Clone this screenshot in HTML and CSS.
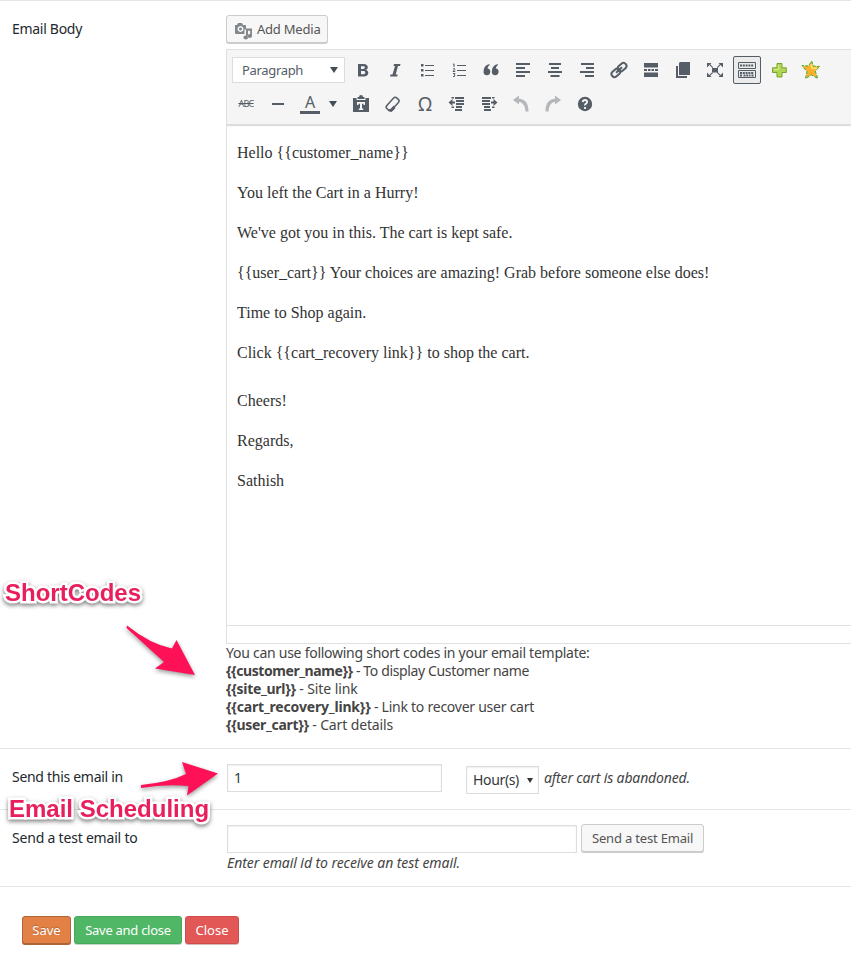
FILE: index.html
```html
<!DOCTYPE html>
<html lang="en">
<head>
<meta charset="utf-8">
<title>Email template</title>
<link rel="stylesheet" href="styles.css">
</head>
<body>
<main class="form">
  <section class="row row-body">
    <div class="label"><span class="t-emailbody">Email Body</span></div>
    <div class="field">
      <button class="btn media">
        <svg width="18" height="18" viewBox="0 0 18 18"><path fill="#82878c" fill-rule="evenodd" d="M0 3h2l1-2h4l1 2h2q1 0 1 1v3.500H9.500V12H1q-1 0-1-1zM5.500 4a3 3 0 1 0 .01 0zM5.500 5.500a1.500 1.500 0 1 1-.01 0zM11 6.500h6v7.500a2.200 2 0 1 1-1.800-2V8.800H13V15.500a2.300 2 0 1 1-2-2z"/></svg>
        <span class="t-media">Add Media</span>
      </button>
      <div class="editor">
        <div class="toolbar">
          <div class="tools">
            <div class="listbox"><span class="t-para">Paragraph</span><i class="caret"></i></div>
            <span class="tool"><svg viewBox="0 0 20 20"><path fill-rule="evenodd" d="M5 4h5.500c3 0 4.300 1.300 4.300 3.200 0 1.400-.8 2.300-2 2.700 1.500.3 2.500 1.300 2.500 2.900 0 2.300-1.700 3.700-4.700 3.700H5zM8 6.200v2.700h2c1.300 0 1.900-.5 1.900-1.400S11.300 6.200 10 6.200zM8 11v3.200h2.300c1.400 0 2-.6 2-1.600s-.7-1.600-2-1.600z"/></svg></span>
            <span class="tool"><svg viewBox="0 0 20 20"><path d="M9 4h6.500l-.5 2h-2l-2.300 8.500h2l-.5 2H5l.5-2h2L10 6H8.500z"/></svg></span>
            <span class="tool"><svg viewBox="0 0 20 20"><path d="M4 4h2.500v2.500H4zM4 9h2.500v2.500H4zM4 14h2.500v2.500H4zM8 5h9v1H8zM8 10h9v1H8zM8 15h9v1H8z"/></svg></span>
            <span class="tool"><svg viewBox="0 0 20 20"><path d="M8 5h9v1H8zM8 10h9v1H8zM8 15h9v1H8z"/><path class="line" d="M4 4.500l1-.7V7M4 9q2-1 2 .2L4 11.500h2.300M4 13.500h2L5 15q1.300 0 1 1-.5 1-2 .5"/></svg></span>
            <span class="tool"><svg viewBox="0 0 20 20"><path d="M8.500 4v1.200Q6.800 6 6.500 8.500h.4a3.400 3.400 0 1 1-4.400 3.700Q2.300 5.500 8.500 4zM16.800 4v1.200Q15.100 6 14.800 8.500h.4a3.400 3.400 0 1 1-4.400 3.700Q10.600 5.500 16.800 4z"/></svg></span>
            <span class="tool"><svg viewBox="0 0 20 20"><path d="M3 3h14v2H3zM3 7h9v2H3zM3 11h14v2H3zM3 15h9v2H3z"/></svg></span>
            <span class="tool"><svg viewBox="0 0 20 20"><path d="M4 3h12v2H4zM6 7h8v2H6zM3 11h14v2H3zM5.500 15h9v2h-9z"/></svg></span>
            <span class="tool"><svg viewBox="0 0 20 20"><path d="M4 3h13v2H4zM9 7h8v2H9zM3 11h14v2H3zM8 15h9v2H8z"/></svg></span>
            <span class="tool"><svg viewBox="0 0 20 20"><g transform="rotate(-42 10 10)" fill="none" stroke="#555d66" stroke-width="2"><rect x="1" y="7" width="9.500" height="6" rx="3"/><rect x="9.500" y="7" width="9.500" height="6" rx="3"/><path d="M6 10h8"/></g></svg></span>
            <span class="tool"><svg viewBox="0 0 20 20"><path d="M3 3h14v4.500H3zM3 9h3v2H3zM7 9h2.500v2H7zM10.500 9H13v2h-2.500zM14 9h3v2h-3zM3 12.500h14V17H3z"/></svg></span>
            <span class="tool"><svg viewBox="0 0 20 20"><path d="M7 2h10v13H6V3zM3 6h2v10h9v2H3z"/></svg></span>
            <span class="tool"><svg viewBox="0 0 20 20"><path d="M7 8h6v4.500H7zM2 3h4.500L5.200 4.300l3 2.900-.8.800-3-2.900L2 7.500zM18 3h-4.500l1.300 1.300-3 2.900.8.800 3-2.900L18 7.500zM2 17h4.500l-1.300-1.300 3-2.900-.8-.8-3 2.900L2 12.500zM18 17h-4.500l1.300-1.300-3-2.900.8-.8 3 2.900 2.400-2.400z"/></svg></span>
            <span class="tool active"><svg viewBox="0 0 20 20"><path class="line" d="M1.500 2.500h17v6h-17zM1.500 10.500h17v7h-17z"/><path class="keys" d="M3 5.500h14M3 13h14M3 15.500h2.500M6.500 15.500h7M14.500 15.500H17"/></svg></span>
            <span class="tool"><svg viewBox="0 0 20 20"><path d="M8 3.500h5v4.300h4.300v4.700H13V17H8v-4.500H3.500V7.800H8z" fill="#b2d554" stroke="#76a52f" stroke-linejoin="round"/><path d="M9.500 5v4.500H5" fill="none" stroke="#d3e993"/></svg></span>
            <span class="tool"><svg viewBox="0 0 20 20"><path d="M10.700 1l1.600 5 6.500.5-4.600 4.500 2.600 7.500-6.300-3.500-6 3.500 1.500-6.800L1 5.500l6.500.5z" fill="#fbb02d" stroke="#36af35" stroke-dasharray="3 1.500"/><path d="M10 4l1 4 5 .5" fill="none" stroke="#ffe36a" stroke-width="1.500"/></svg></span>
          </div>
          <div class="tools">
            <span class="tool abc">ABC</span>
            <span class="tool"><svg viewBox="0 0 20 20"><path d="M4 9h12v2H4z"/></svg></span>
            <span class="tool split"><span class="fore">A</span><i class="caret"></i></span>
            <span class="tool"><svg viewBox="0 0 20 20"><path fill-rule="evenodd" d="M2 4h3.500v2h9V4H18v14H2zM6.500 3H8a2 2 0 0 1 4 0h1.500v2h-7zM6 8v3h1.500V9.700H9v4.800H7.800V16h4.400v-1.500H11V9.700h1.500V11H14V8z"/></svg></span>
            <span class="tool"><svg viewBox="0 0 20 20"><g transform="rotate(-48 10 10)"><rect class="thick" x="2.500" y="6.500" width="14.500" height="6.500" rx="2.200"/><path d="M2.500 10v2.500q0 2 2 2h4l1-3H4.500z"/></g></svg></span>
            <span class="tool omega">Ω</span>
            <span class="tool"><svg viewBox="0 0 20 20"><path d="M8 3h9v2H8zM9 6h8v2H9zM9 9h8v2H9zM9 12h6v2H9zM8 15h7v2H8zM1.500 8.500L5.500 5v2.500H8v2H5.500V12zM4.500 3h2.500v1.500H4.500zM4.500 12.500H7V14H4.500z"/></svg></span>
            <span class="tool"><svg viewBox="0 0 20 20"><path d="M3 3h9v2H3zM3 6h8v2H3zM3 9h8v2H3zM5 12h6v2H5zM5 15h7v2H5zM18.500 8.500L14.500 5v2.500H12v2h2.500V12zM13 3h2.500v1.500H13zM13 12.500h2.500V14H13z"/></svg></span>
            <span class="tool off"><svg viewBox="0 0 20 20"><path d="M8 1.500v3.200c6 .5 9.500 4 9.500 12.800h-3C14 11.500 12 8.500 8 8v2.500L2 6z"/></svg></span>
            <span class="tool off"><svg viewBox="0 0 20 20"><path d="M12 1.500v3.200c-6 .5-9.500 4-9.500 12.800h3C6 11.500 8 8.500 12 8v2.500L18 6z"/></svg></span>
            <span class="tool"><svg viewBox="0 0 20 20"><circle cx="10" cy="10" r="7.200"/><path d="M7.700 8Q8 6 10 6t2.200 1.800Q12.200 9 11 9.600t-1 1.900M10 13v2" fill="none" stroke="#f5f5f5" stroke-width="1.800"/></svg></span>
          </div>
        </div>
        <div class="content">
          <p>Hello {{customer_name}}</p>
          <p>You left the Cart in a Hurry!</p>
          <p>We've got you in this. The cart is kept safe.</p>
          <p>{{user_cart}} Your choices are amazing! Grab before someone else does!</p>
          <p>Time to Shop again.</p>
          <p class="last">Click {{cart_recovery link}} to shop the cart.</p>
          <p>Cheers!</p>
          <p>Regards,</p>
          <p>Sathish</p>
        </div>
        <div class="status"></div>
      </div>
      <div class="codes">
        <div><span class="c0">You can use following short codes in your email template:</span></div>
        <div><b class="c1">{{customer_name}}</b><span class="c1s"> - To display Customer name</span></div>
        <div><b class="c2">{{site_url}}</b><span class="c2s"> - Site link</span></div>
        <div><b class="c3">{{cart_recovery_link}}</b><span class="c3s"> - Link to recover user cart</span></div>
        <div><b class="c4">{{user_cart}}</b><span class="c4s"> - Cart details</span></div>
      </div>
    </div>
  </section>
  <section class="row row-send">
    <div class="label"><span class="t-sendin">Send this email in</span></div>
    <div class="field inline">
      <div class="input delay">1</div>
      <div class="input unit"><span class="t-hour">Hour(s)</span><i class="caret small"></i></div>
      <em class="t-after">after cart is abandoned.</em>
    </div>
  </section>
  <section class="row row-test">
    <div class="label"><span class="t-test">Send a test email to</span></div>
    <div class="field">
      <div class="inline">
        <div class="input address"></div>
        <button class="btn send"><span class="t-btn">Send a test Email</span></button>
      </div>
      <div class="hint"><em class="t-hint">Enter email id to receive an test email.</em></div>
    </div>
  </section>
  <section class="actions">
    <button class="act save">Save</button>
    <button class="act saveclose"><span class="t-sc">Save and close</span></button>
    <button class="act close">Close</button>
  </section>
</main>
<svg class="arrows" width="240" height="200" viewBox="0 610 240 200">
  <path d="M127 625.500Q150 644 172 648.500L176.500 640 195 675 155 668.500 164 662Q143 643 126.500 628z"/>
  <path d="M141 785Q170 782 186 774L182 762 218 773.500 187 795.500 188.500 786Q165 784 141 788z"/>
</svg>
<div class="note note-codes">ShortCodes</div>
<div class="note note-sched">Email Scheduling</div>
</body>
</html>
```

FILE: styles.css
```css
* { box-sizing: border-box; }
body {
  margin: 0;
  width: 851px;
  height: 972px;
  overflow: hidden;
  position: relative;
  background: #fff;
  color: #444;
  font: 14px/18px "Noto Sans", "Open Sans", sans-serif;
}
span, b, em { white-space: pre; }
button { font-family: inherit; margin: 0; }

.row { display: flex; border-top: 1px solid #e5e5e5; }
.row-body { height: 748px; }
.row-send { height: 61px; }
.row-test { height: 78px; border-bottom: 1px solid #e5e5e5; }
.label { width: 226px; flex: none; padding: 19px 0 0 12px; color: #23282d; }
.field { flex: 1; min-width: 0; }
.inline { display: flex; align-items: flex-start; }

.btn {
  display: flex;
  align-items: center;
  background: #f7f7f7;
  border: 1px solid #ccc;
  border-radius: 3px;
  box-shadow: 0 1px 0 #ccc;
  color: #555;
  font-size: 13px;
  line-height: 18px;
}
.media { margin-top: 14px; width: 102px; height: 28px; padding: 0 0 0 8px; gap: 4px; }
.media svg { margin-top: 3px; }

.editor { margin-top: 6px; border: 1px solid #e0e0e0; border-right: 0; height: 595px; display: flex; flex-direction: column; }
.toolbar {
  height: 75px;
  background: #f5f5f5;
  border-bottom: 1px solid #ddd;
  box-shadow: 0 1px 1px #ddd;
  padding: 6px 0 0 5px;
  display: flex;
  flex-direction: column;
  gap: 6px;
}
.tools { display: flex; gap: 4px; height: 28px; }
.tool { width: 28px; height: 28px; flex: none; display: flex; align-items: center; justify-content: center; color: #555d66; border-radius: 2px; }
.tool svg { width: 20px; height: 20px; fill: #555d66; }
.tool .line { fill: none; stroke: #555d66; stroke-width: 1; }
.tool .thick { fill: none; stroke: #555d66; stroke-width: 1.5; }
.tool .keys { fill: none; stroke: #555d66; stroke-width: 1.8; stroke-dasharray: 2 .8; }
.active { border: 1px solid #555d66; background: #ebebeb; }
.off svg { opacity: .4; }
.listbox { width: 113px; height: 26px; margin-top: 1px; background: #fff; border: 1px solid #ddd; display: flex; align-items: center; justify-content: space-between; padding: 0 6px 0 9px; color: #555d66; font-size: 13px; }
.caret { width: 0; height: 0; border: 4px solid transparent; border-top: 6px solid #444c55; border-bottom: 0; }
.caret.small { border-width: 5px 3px 0; border-top-color: #333; }
.abc { font-size: 9px; letter-spacing: -.7px; text-decoration: line-through; }
.split { width: 47px; justify-content: flex-start; padding-left: 4px; gap: 9px; }
.fore { width: 20px; height: 20px; border-bottom: 3px solid #555d66; text-align: center; font-size: 16px; line-height: 17px; }
.omega { font-size: 19px; }

.content { flex: 1; padding: 16px 10px 0; font: 16px/24px "Liberation Serif", "Times New Roman", serif; color: #333; }
.content p { margin: 0 0 16px; }
.content .last { margin-bottom: 24px; }
.status { height: 18px; border-top: 1px solid #e0e0e0; }

.input { border: 1px solid #ddd; background: #fff; box-shadow: inset 0 1px 2px rgba(0,0,0,.07); height: 28px; color: #32373c; line-height: 26px; }
.delay { margin: 15px 0 0 1px; width: 215px; padding-left: 6px; }
.unit { margin: 17px 0 0 24px; width: 73px; padding: 0 5px 0 6px; display: flex; align-items: center; justify-content: space-between; }
.t-after { margin: 20px 0 0 5px; }
.address { margin: 15px 0 0 1px; width: 350px; }
.send { margin: 14px 0 0 4px; width: 123px; height: 28px; padding: 0 0 0 10px; }
.hint { margin-top: 1px; padding-left: 1px; }

.actions { display: flex; gap: 3px; padding: 29px 0 0 22px; }
.act { height: 28px; padding: 0; border: 1px solid; border-radius: 3px; color: #fff; font-size: 13px; line-height: 18px; text-align: center; }
.save { width: 49px; background: #e28045; border-color: #ad6437; box-shadow: 0 1px 0 #ad6437; text-shadow: 0 -1px 1px #ad6437; }
.saveclose { width: 108px; background: #4fb765; border-color: #46a859; box-shadow: 0 1px 0 #c5d5c8; }
.close { width: 54px; background: #e25856; border-color: #cf4c4c; box-shadow: 0 1px 0 #d8b9b9; }

.arrows { position: absolute; left: 0; top: 610px; fill: #ff1158; filter: drop-shadow(0 2px 2px rgba(0,0,0,.4)); }
.note {
  position: absolute;
  font: bold 24px/28px "Liberation Sans", Arial, sans-serif;
  color: #e91e5c;
  white-space: nowrap;
  -webkit-text-stroke: 5px #fff;
  paint-order: stroke fill;
  filter: drop-shadow(0 2px 2px rgba(0,0,0,.5));
}
.note-codes { left: 5px; top: 579px; }
.note-sched { left: 9px; top: 795px; }

.t-emailbody, .t-sendin { letter-spacing: -.29px; }
.t-test { letter-spacing: -.2px; }
.t-hour { letter-spacing: -.35px; }
.t-after { letter-spacing: -.15px; }
.t-hint { letter-spacing: -.07px; }
.t-media { letter-spacing: -.22px; }
.t-para { letter-spacing: -.33px; }
.t-btn { letter-spacing: -.18px; }
.t-sc { letter-spacing: -.28px; }
.c0 { letter-spacing: -.26px; }
.c1 { letter-spacing: -.42px; }
.c1s { letter-spacing: -.36px; }
.c2 { letter-spacing: -.27px; }
.c2s { letter-spacing: -.1px; }
.c3 { letter-spacing: -.17px; }
.c3s { letter-spacing: -.25px; }
.c4 { letter-spacing: -.29px; }
.c4s { letter-spacing: -.13px; }
```
